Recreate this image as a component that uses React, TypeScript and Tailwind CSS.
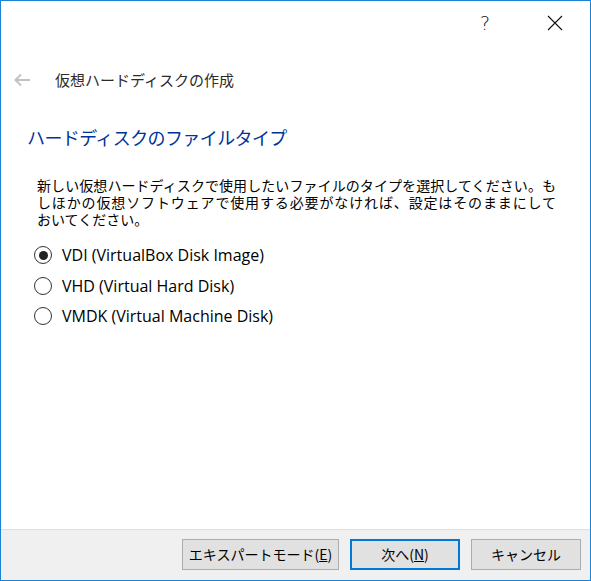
import React from "react";

const jp = '"Noto Sans CJK JP", "Noto Sans", sans-serif';

function Radio({ checked, label }: { checked?: boolean; label: string }) {
  return (
    <div className="flex h-[30.5px] items-center">
      <div className="ml-[33px] flex h-[18px] w-[18px] items-center justify-center rounded-full border border-[#333333] bg-white">
        {checked && <div className="h-[9px] w-[9px] rounded-full bg-[#222222]" />}
      </div>
      <span
        className="ml-[10px] text-[16px] leading-[20px] text-black"
        style={{ fontFamily: '"Open Sans", "Noto Sans CJK JP", sans-serif' }}
      >
        {label}
      </span>
    </div>
  );
}

function Btn({ children, primary, w }: { children: React.ReactNode; primary?: boolean; w: string }) {
  return (
    <div
      className={
        "flex h-[31px] items-center justify-center bg-[#e1e1e1] text-[14px] text-black " +
        w +
        (primary ? " border-2 border-[#0078d7]" : " border border-[#adadad]")
      }
    >
      {children}
    </div>
  );
}

export default function App() {
  return (
    <div
      className="flex h-[581px] w-[591px] flex-col border border-[#1883d7] bg-white"
      style={{ fontFamily: jp }}
    >
      {/* title bar */}
      <div className="flex h-[44px] justify-end">
        <div
          className="flex w-[70px] items-center justify-center pt-[1px] text-[19px] font-light text-[#111]"
          style={{ fontFamily: '"DejaVu Sans", sans-serif' }}
        >
          ?
        </div>
        <div className="flex w-[70px] items-center justify-center">
          <svg width="16" height="16" viewBox="0 0 16 16">
            <path d="M1 1 L15 15 M15 1 L1 15" stroke="#111" strokeWidth="1.1" fill="none" />
          </svg>
        </div>
      </div>

      {/* header row */}
      <div className="mt-[23px] flex h-[24px] items-center">
        <svg className="ml-[12px]" width="18" height="14" viewBox="0 0 18 14">
          <path d="M17 7 H2.5 M8 1.5 L2.5 7 L8 12.5" stroke="#c2c2c2" strokeWidth="2" fill="none" />
        </svg>
        <span className="ml-[24px] text-[15px] leading-[24px] text-[#2b2b2b]">仮想ハードディスクの作成</span>
      </div>

      {/* main title */}
      <div className="ml-[26px] mt-[31px] text-[18px] leading-[28px] tracking-[-0.6px] text-[#003399]">
        ハードディスクのファイルタイプ
      </div>

      {/* description */}
      <div className="ml-[36px] mt-[26px] w-[519px] text-[14px] leading-[17px] text-black">
        <span className="block text-justify [text-align-last:justify]">
          新しい仮想ハードディスクで使用したいファイルのタイプを選択してください。も
        </span>
        <span className="block text-justify [text-align-last:justify]">
          しほかの仮想ソフトウェアで使用する必要がなければ、設定はそのままにして
        </span>
        <span className="block">おいてください。</span>
      </div>

      {/* radios */}
      <div className="mt-[12px] flex flex-col">
        <Radio checked label="VDI (VirtualBox Disk Image)" />
        <Radio label="VHD (Virtual Hard Disk)" />
        <Radio label="VMDK (Virtual Machine Disk)" />
      </div>

      <div className="flex-1" />

      {/* footer */}
      <div className="flex h-[51px] items-start justify-end gap-[11px] border-t border-[#dfdfdf] bg-[#f0f0f0] pr-[9px] pt-[9px]">
        <Btn w="w-[157px]">
          エキスパートモード(<span className="underline">E</span>)
        </Btn>
        <Btn w="w-[110px]" primary>
          次へ(<span className="underline">N</span>)
        </Btn>
        <Btn w="w-[110px]">キャンセル</Btn>
      </div>
    </div>
  );
}
